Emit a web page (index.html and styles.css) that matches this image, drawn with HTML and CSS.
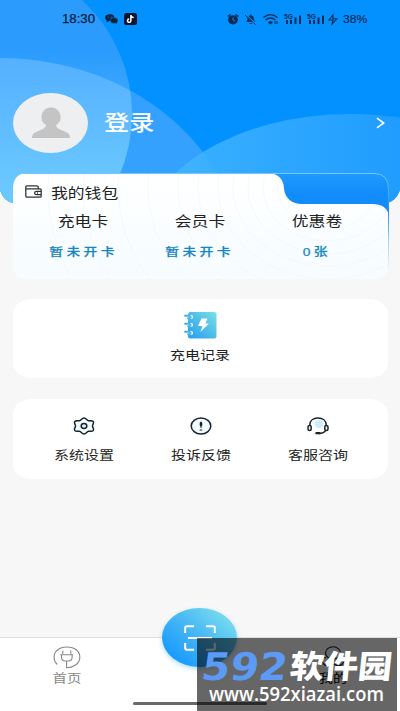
FILE: index.html
```html
<!DOCTYPE html>
<html lang="zh-CN">
<head>
<meta charset="utf-8">
<title>我的</title>
<link rel="stylesheet" href="styles.css">
</head>
<body>
<div class="screen">
  <svg class="hero" width="400" height="204" viewBox="0 0 400 204">
    <defs>
      <clipPath id="heroClip"><path d="M0 0H400V190Q396 202 386 203H14Q4 202 0 190Z"/></clipPath>
      <linearGradient id="ringA" x1="0" y1="0" x2="0" y2="1"><stop offset="0.3" stop-color="#2b9cfe"/><stop offset="0.95" stop-color="#6dc9fd"/></linearGradient>
      <linearGradient id="ringB" gradientUnits="userSpaceOnUse" x1="0" y1="58" x2="0" y2="190"><stop offset="0" stop-color="#5cb3ff" stop-opacity=".85"/><stop offset="1" stop-color="#6ecbff" stop-opacity=".85"/></linearGradient>
      <linearGradient id="ringC" x1="0" y1="0" x2="1" y2="0"><stop offset="0.1" stop-color="#40b4ff"/><stop offset="0.75" stop-color="#1c98ff"/></linearGradient>
      <linearGradient id="ringD" gradientUnits="userSpaceOnUse" x1="0" y1="80" x2="0" y2="190"><stop offset="0" stop-color="#349fff"/><stop offset="1" stop-color="#34a2ff"/></linearGradient>
      <clipPath id="left"><ellipse cx="-28" cy="114" rx="160" ry="157"/></clipPath>
    </defs>
    <g clip-path="url(#heroClip)">
      <rect width="400" height="204" fill="#0291ff"/>
      <ellipse cx="0" cy="263" rx="241" ry="205" fill="url(#ringD)"/>
      <ellipse cx="-28" cy="114" rx="160" ry="157" fill="url(#ringA)"/>
      <ellipse cx="0" cy="263" rx="241" ry="205" fill="url(#ringB)" clip-path="url(#left)"/>
      <ellipse cx="350" cy="244" rx="208" ry="130" fill="url(#ringC)" opacity=".88"/>
    </g>
  </svg>

  <header class="status">
    <div class="status-left">
      <span class="time">18:30</span>
      <svg width="13" height="10" viewBox="0 0 13 10"><ellipse cx="4.8" cy="3.7" rx="4.6" ry="3.4"/><path d="M2 6L1.5 8.3L5 6.8Z"/><ellipse cx="9" cy="6.5" rx="4" ry="2.9" stroke="#188fed" stroke-width=".5"/><path d="M10 8.5L12 9.8L11.8 7Z"/><circle cx="3.3" cy="3" r=".6" fill="#2489dd"/><circle cx="6.2" cy="3" r=".6" fill="#2489dd"/></svg>
      <svg width="13" height="12" viewBox="0 0 13 12"><rect width="13" height="12" rx="2.5" fill="#08152b"/><path d="M6.9 2V7.7A1.7 1.6 0 1 1 5.2 6.1M6.9 2.4Q7.6 4.5 9.7 4.6" fill="none" stroke="#fff" stroke-width="1.5"/></svg>
    </div>
    <svg class="signals" width="111" height="13" viewBox="0 0 111 13">
      <g fill="#082c55"><ellipse cx="6" cy="6.8" rx="5" ry="4.6"/><path d="M0 3L3 1L4 2L1 4ZM12 3L9 1L8 2L11 4Z"/><path d="M6 4.5V7L8 8" fill="none" stroke="#1585e4" stroke-width="1"/>
      <path d="M19 9Q20.5 8 20.5 5Q20.5 2.5 23 2.5V1.4H24.5V2.5Q27 3 27 5.5Q27 8 28.5 9ZM22 10H25.5Q23.8 12 22 10Z"/></g>
      <path d="M18.5 1.6L29 11.2" stroke="#0291ff" stroke-width="1.8"/><path d="M18 2L28.6 11.6" stroke="#082c55"/>
      <g fill="none" stroke="#082c55" stroke-width="1.3"><path d="M36.5 4.4Q43.5-1 50.5 4.4M38.5 7Q43.5 3 48.5 7"/><path d="M41 9.3Q43.5 7.5 46 9.3L43.5 11Z" fill="#082c55" stroke-width=".6"/></g>
      <path d="M48 8V11M50 8V11" stroke="#082c55"/>
      <g fill="#082c55"><path d="M59 7H61V11H59ZM63 7H65V11H63ZM67.5 4.5H69.5V11H67.5ZM72 2.5H74V11H72ZM82 7H84V11H82ZM86 7H88V11H86ZM90.5 4.5H92.5V11H90.5ZM95 2.5H97V11H95Z"/><text x="57" y="5.5" font-size="6.5" font-weight="700" textLength="9" lengthAdjust="spacingAndGlyphs">5G</text><text x="80" y="5.5" font-size="6.5" font-weight="700" textLength="9" lengthAdjust="spacingAndGlyphs">5G</text></g>
      <path d="M106 1.8L102 7H106L105 11L110 5.7H106Z" fill="none" stroke="#082c55" stroke-width="1.1"/>
    </svg>
    <span class="battery">38%</span>
  </header>

  <section class="profile">
    <div class="avatar"><svg width="40" height="32" viewBox="0 0 40 32"><ellipse cx="20" cy="10" rx="9.7" ry="9.7"/><path d="M15 15H25Q24 20 28 22L36 25.5Q39 27 39 31H1Q1 27 4 25.5L12 22Q16 20 15 15Z"/></svg></div>
    <span class="login wide">登录</span>
    <svg class="chevron" width="9" height="12" viewBox="0 0 9 12"><path d="M1 1.2L7.7 6L1 10.8"/></svg>
  </section>

  <section class="wallet">
    <svg class="wallet-bg" width="376" height="107" viewBox="0 0 376 107">
      <defs>
        <linearGradient id="tab" x1="0" y1="0" x2="0" y2="1"><stop offset="0" stop-color="#1e9aff"/><stop offset=".35" stop-color="#128cf9"/><stop offset="1" stop-color="#128cf9"/></linearGradient>
        <linearGradient id="edge" gradientUnits="userSpaceOnUse" x1="0" y1="0" x2="0" y2="95"><stop offset="0" stop-color="#79c6ff"/><stop offset=".4" stop-color="#218ff0"/><stop offset="1" stop-color="#9fd4fb" stop-opacity=".2"/></linearGradient>
        <linearGradient id="paper" x1="0" y1="0" x2="0" y2="1"><stop offset="0" stop-color="#fff"/><stop offset="1" stop-color="#f6fcff"/></linearGradient>
        <clipPath id="walletClip"><path d="M15 0H254C266 0 271 7 271 16C272 25 279 31 289 31H359C369 31 374 35 375.5 41V92Q375 106 361 106H15Q0 106 0 92V16Q0 0 15 0Z"/></clipPath>
      </defs>
      <path d="M250 .5H361Q375.5 .5 375.5 16V60H250Z" fill="url(#tab)"/>
      <path d="M15 0H254C266 0 271 7 271 16C272 25 279 31 289 31H359C369 31 374 35 375.5 41V92Q375 106 361 106H15Q0 106 0 92V16Q0 0 15 0Z" fill="url(#paper)"/>
      <g clip-path="url(#walletClip)" fill="none" stroke="#f0f6fa" stroke-width=".7">
        <ellipse cx="315" cy="14" rx="50" ry="42"/><ellipse cx="315" cy="14" rx="65" ry="54"/><ellipse cx="315" cy="14" rx="80" ry="67"/><ellipse cx="315" cy="14" rx="95" ry="79"/><ellipse cx="315" cy="14" rx="110" ry="92"/><ellipse cx="315" cy="14" rx="130" ry="108"/><ellipse cx="315" cy="14" rx="150" ry="125"/><ellipse cx="315" cy="14" rx="180" ry="150"/><ellipse cx="315" cy="14" rx="210" ry="175"/><ellipse cx="315" cy="14" rx="245" ry="204"/><ellipse cx="315" cy="14" rx="280" ry="233"/>
      </g>
      <path d="M10 .5H361Q375.5 .5 375.5 16V95" fill="none" stroke="url(#edge)"/>
    </svg>
    <div class="wallet-title">
      <svg width="17" height="13" viewBox="0 0 17 13"><path d="M13.2 3.8V1.8Q13.2.8 12 .8H2Q.8.8.8 2V11Q.8 12.2 2 12.2H15Q16.2 12.2 16.2 11V5Q16.2 3.8 15 3.8H1M16 6.3H11.5Q9.6 6.3 9.6 8T11.5 9.7H16M12 8H13"/></svg>
      <span class="wide">我的钱包</span>
    </div>
    <div class="columns">
      <div class="account"><span class="wide">充电卡</span><b class="wide">暂未开卡</b></div>
      <div class="account"><span class="wide">会员卡</span><b class="wide">暂未开卡</b></div>
      <div class="account"><span class="wide">优惠卷</span><b class="wide">0张</b></div>
    </div>
  </section>

  <section class="card records">
    <svg width="33" height="27" viewBox="0 0 33 27"><defs><linearGradient id="book" x1="1" y1="0" x2="0" y2="1"><stop offset="0" stop-color="#79e2e5"/><stop offset=".5" stop-color="#4ebde8"/><stop offset="1" stop-color="#269df3"/></linearGradient></defs><rect x="4" y="0" width="28.5" height="26.5" rx="2.5" fill="url(#book)"/><g fill="none" stroke="#fff" stroke-width="4.2" stroke-linecap="round"><path d="M1 5H7M1 13H7M1 21H7"/></g><g fill="none" stroke="#42b5e7" stroke-width="1.9" stroke-linecap="round"><path d="M1 3.8H5.5Q8 5 5.5 6.3H4M1 11.8H5.5Q8 13 5.5 14.3H4M1 19.8H5.5Q8 21 5.5 22.3H4"/></g><path d="M17.5 6.5H23.5L21.5 11.5H25L16.5 20L18.3 14H14Z" fill="#fff"/></svg>
    <span class="wide">充电记录</span>
  </section>

  <section class="card services">
    <div class="service"><svg width="22" height="18" viewBox="0 0 22 18"><path d="M11 1C13.2 1 13.8 3.3 15.5 3.7C17 4.1 18.8 2.9 20.2 4.5C21.6 6.2 19.5 7.3 19.5 9S21.6 11.8 20.2 13.5C18.8 15.1 17 13.9 15.5 14.3C13.8 14.7 13.2 17 11 17S8.2 14.7 6.5 14.3C5 13.9 3.2 15.1 1.8 13.5C.4 11.8 2.5 10.7 2.5 9S.4 6.2 1.8 4.5C3.2 2.9 5 4.1 6.5 3.7C8.2 3.3 8.8 1 11 1Z" fill="#f3fbfe"/><ellipse cx="11" cy="9" rx="2.8" ry="2.4" fill="#daf3fc"/></svg><span class="wide">系统设置</span></div>
    <div class="service"><svg width="22" height="18" viewBox="0 0 22 18"><ellipse cx="11" cy="9" rx="9.8" ry="8" fill="#f5fcff"/><ellipse cx="11" cy="7" rx="1.4" ry="2.5" fill="#15252e" stroke="none"/><path d="M11 9V11M9.7 13H12.3" stroke-width="1"/></svg><span class="wide">投诉反馈</span></div>
    <div class="service"><svg width="22" height="18" viewBox="0 0 22 18"><ellipse cx="12" cy="7" rx="4.3" ry="4" fill="#cdeefb" stroke="none"/><path d="M2.8 8C2.8 3.5 6.4 1 11 1S19.2 3.5 19.2 8M19 12.8Q17 16.5 11.5 16.4"/><rect x="1" y="8.6" width="3.2" height="5" rx="1.5" fill="#fff6df"/><rect x="17.8" y="8.6" width="3.2" height="5" rx="1.5" fill="#fff6df"/><path d="M9.4 16.2H12.6" stroke-width="2.3" stroke-linecap="round"/></svg><span class="wide">客服咨询</span></div>
  </section>

  <nav class="tabs">
    <div class="tab"><svg width="28" height="23" viewBox="0 0 28 23"><path d="M4.2 18.5C-.2 14 .1 7.5 4.5 4C9-.1 18.8-.1 23.5 4C28.5 8.3 27.8 15.7 22.2 19.3C19.7 21 16.5 21.8 13.6 21.8V15M9.8 4.5V8M17.8 4.5V8M7.2 8.7H20.3M8.5 9V11.3C8.5 13.8 10 15 12 15H15.4C17.7 15 19.1 13.8 19.1 11.3V9"/></svg><span class="wide">首页</span></div>
    <div class="scan"><svg width="32" height="26" viewBox="0 0 32 26"><path d="M1.2 8V3Q1.2 1.2 3 1.2H10M22 1.2H29Q30.8 1.2 30.8 3V8M1.2 18V23Q1.2 24.8 3 24.8H10M22 24.8H29Q30.8 24.8 30.8 23V18M4 13H28"/></svg></div>
    <div class="tab mine"><svg width="28" height="23" viewBox="0 0 28 23"><ellipse cx="14" cy="7" rx="7.5" ry="6.2"/><path d="M2 13Q4 20 10 20Q14 16 18 20Q24 20 26 13M2 13Q0 11 2 10.5L7 12M26 13Q28 11 26 10.5L21 12"/></svg><span class="wide">我的</span></div>
  </nav>
  <div class="home-indicator"></div>

  <svg class="stamp" width="200" height="73" viewBox="0 0 200 73">
    <rect width="200" height="73" fill="#000" fill-opacity=".6"/>
    <text class="stamp-num" transform="translate(3 42) skewX(-8)" textLength="86" lengthAdjust="spacingAndGlyphs">592</text>
    <text class="stamp-name" transform="translate(92 40) skewX(-6)" textLength="102" lengthAdjust="spacingAndGlyphs">软件园</text>
    <text class="stamp-url" x="12" y="63" textLength="175" lengthAdjust="spacingAndGlyphs">www.592xiazai.com</text>
  </svg>
</div>
</body>
</html>
```

FILE: styles.css
```css
* { box-sizing: border-box; }
body { margin: 0; font-family: "Liberation Sans", "Noto Sans CJK SC", sans-serif; color: #222; }
.screen { position: relative; width: 400px; height: 711px; overflow: hidden; display: flex; flex-direction: column; background: #f7f7f7; }
.screen svg { flex-shrink: 0; display: block; }
.wide { display: inline-block; transform: scaleX(1.2); white-space: nowrap; }
.hero { position: absolute; top: 0; left: 0; }
.status { position: relative; height: 38px; padding: 0 33px 0 62px; display: flex; align-items: center; color: #082c55; }
.status-left { display: flex; align-items: center; gap: 6px; flex: 1; color: #07213e; fill: #07213e; }
.time { width: 37px; font-size: 12px; line-height: 14px; transform: scaleX(1.1); transform-origin: left; -webkit-text-stroke: .25px; }
.signals { margin-right: 5px; }
.battery { width: 24px; font-size: 11px; transform: scaleX(1.1); transform-origin: left; -webkit-text-stroke: .2px; }
.profile { position: relative; height: 135px; padding: 55px 15px 0 13px; display: flex; align-items: flex-start; }
.avatar { width: 75px; height: 60px; border-radius: 50%; background: #eeeff0; display: flex; align-items: center; justify-content: center; fill: #c4c4c4; }
.login { margin: 14px 0 0 16px; flex: 1; font-size: 21px; line-height: 32px; color: #fff; transform-origin: left; font-weight: 500; }
.chevron { margin-top: 24px; fill: none; stroke: #fff; stroke-width: 1.6; }
.wallet { position: relative; margin: 0 11px 0 13px; height: 106px; flex: none; }
.wallet-bg { position: absolute; top: 0; left: 0; }
.wallet-title { position: relative; display: flex; align-items: center; height: 37px; padding-left: 12px; gap: 9px; font-size: 14px; fill: none; stroke: #333; stroke-width: 1.3; }
.wallet-title .wide { stroke: none; transform-origin: left; }
.columns { position: relative; padding: 0 14px 0 12px; display: grid; grid-template-columns: repeat(3, 1fr); }
.account { display: flex; flex-direction: column; align-items: center; font-size: 14px; line-height: 22px; }
.account b { margin-top: 9px; font-size: 11.5px; line-height: 22px; letter-spacing: 2.8px; color: #1687bd; font-weight: 500; -webkit-text-stroke: .2px; }
.card { margin: 20px 12px 0 13px; border-radius: 18px / 15px; background: #fff; flex: none; font-size: 12.5px; }
.records { height: 79px; padding-top: 13px; display: flex; flex-direction: column; align-items: center; }
.records .wide { margin-top: 7px; line-height: 20px; }
.services { height: 80px; margin-top: 21px; padding: 18px 12px 0; display: grid; grid-template-columns: repeat(3, 1fr); }
.service { display: flex; flex-direction: column; align-items: center; line-height: 20px; fill: none; stroke: #15252e; stroke-width: 1.5; }
.service .wide { stroke: none; margin: 11px 0 0 1px; }
.tabs { margin-top: auto; height: 74px; flex: none; display: grid; grid-template-columns: repeat(3, 1fr); justify-items: center; background: #fff; border-top: 1px solid #dedede; }
.tab { display: flex; flex-direction: column; align-items: center; padding-top: 8px; font-size: 12px; line-height: 18px; color: #888; fill: none; stroke: #888; stroke-width: 1.1; }
.tab .wide { stroke: none; margin-top: 1px; }
.tabs .mine { color: #000; stroke: #0a1d38; }
.scan { width: 75px; height: 59px; margin-top: -30px; border-radius: 50%; background: linear-gradient(40deg, #189bff 15%, #45b6f5 50%, #7bdeed 90%); box-shadow: 0 2px 5px #189bff55; display: flex; align-items: center; justify-content: center; fill: none; stroke: #fff; stroke-width: 2; }
.home-indicator { position: absolute; left: 133px; bottom: 6px; width: 134px; height: 3px; border-radius: 2px; background: #696969; }
.stamp { position: absolute; left: 197px; top: 638px; }
.stamp-num { font: 700 38px "DejaVu Sans", sans-serif; fill: #5b9bf5; }
.stamp-name { font: 900 32px "Noto Sans CJK SC", sans-serif; fill: #fff; }
.stamp-url { font: 600 20px "Open Sans", "Noto Sans", sans-serif; fill: #fff; }
```
